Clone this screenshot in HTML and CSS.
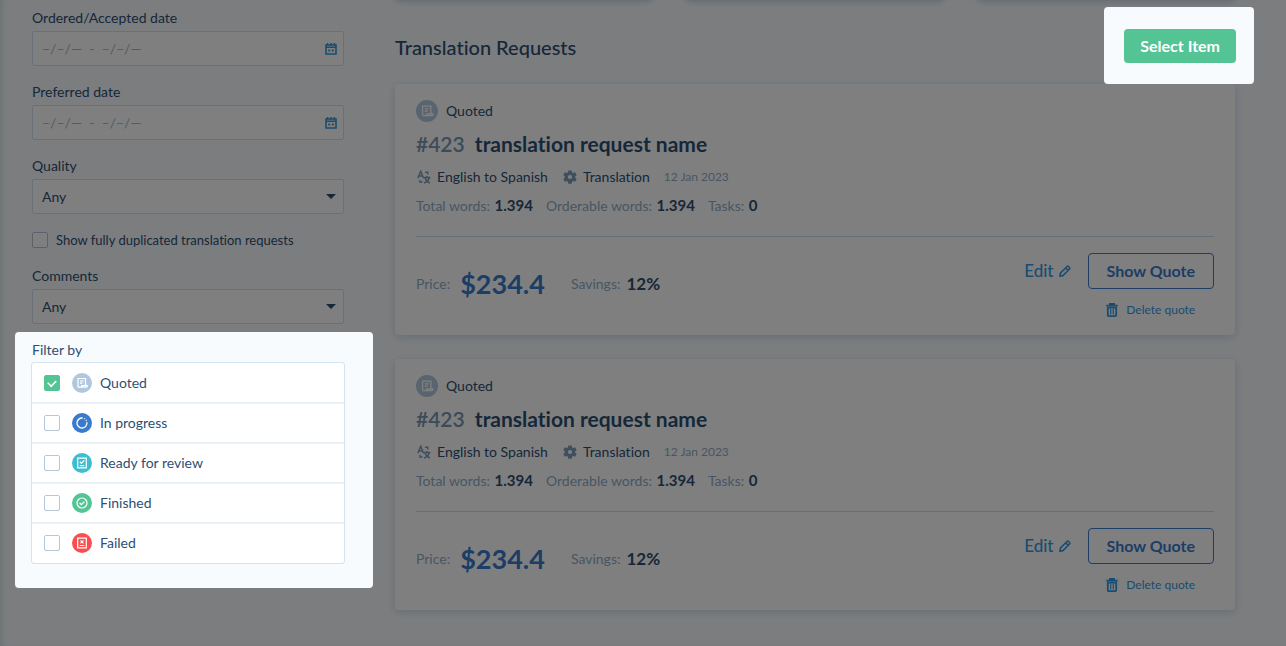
FILE: index.html
```html
<!DOCTYPE html>
<html lang="en">
<head>
  <meta charset="UTF-8">
  <meta name="viewport" content="width=device-width, initial-scale=1.0">
  <title>Translation Requests</title>
  <link rel="stylesheet" href="styles.css">
</head>
<body>
  <!-- shared icons -->
  <svg class="sprite" aria-hidden="true">
    <symbol id="icon-calendar" viewBox="0 0 12 12">
      <path d="M1 2h10v9H1zM1 4.2h10" fill="none" stroke="currentColor" stroke-width="1.6"/>
      <path d="M2.6 0v2.5M6 0v2.5M9.4 0v2.5" stroke="currentColor" stroke-width="1.6"/>
      <path d="M3.2 6.6h2v2h-2zM6.8 6.6h2v2h-2z" fill="currentColor"/>
    </symbol>
    <symbol id="icon-quoted" viewBox="0 0 20 20">
      <circle cx="10" cy="10" r="10" fill="#b0c8de"/>
      <path d="M6 14.2V5.5h7.5v7.2M6 14.2h8.2c.8 0 1.2-.7 1.2-1.5H9.6c0 .9-.5 1.5-1.4 1.5" fill="none" stroke="#fff" stroke-width="1.2"/>
      <path d="M8 8h3.6M8 10.2h2.4" stroke="#fff" stroke-width="1.2"/>
    </symbol>
    <symbol id="icon-progress" viewBox="0 0 20 20">
      <circle cx="10" cy="10" r="10" fill="#387acb"/>
      <path d="M10.8 5.1a5 5 0 1 0 4.1 4.1" fill="none" stroke="#fff" stroke-width="1.3"/>
      <path d="M12.3 5.5l.8.5M14 7l.5.8" stroke="#fff" stroke-width="1.3"/>
    </symbol>
    <symbol id="icon-review" viewBox="0 0 20 20">
      <circle cx="10" cy="10" r="10" fill="#3cbdd0"/>
      <path d="M5.7 5.2h8.6v9.6H5.7z" fill="none" stroke="#fff" stroke-width="1.2"/>
      <path d="M7.8 8.8l1.6 1.5 2.9-3M7.8 12.7h4.4" fill="none" stroke="#fff" stroke-width="1.2"/>
    </symbol>
    <symbol id="icon-finished" viewBox="0 0 20 20">
      <circle cx="10" cy="10" r="10" fill="#54c495"/>
      <circle cx="10" cy="10" r="5" fill="none" stroke="#fff" stroke-width="1.2"/>
      <path d="M7.6 10l1.8 1.7 3-3.1" fill="none" stroke="#fff" stroke-width="1.3"/>
    </symbol>
    <symbol id="icon-failed" viewBox="0 0 20 20">
      <circle cx="10" cy="10" r="10" fill="#f94d4f"/>
      <path d="M5.7 5.2h8.6v9.6H5.7z" fill="none" stroke="#fff" stroke-width="1.2"/>
      <path d="M8.5 7.3l3 3M11.5 7.3l-3 3M7.8 12.5h4.4" stroke="#fff" stroke-width="1.2"/>
    </symbol>
    <symbol id="icon-language" viewBox="0 0 14 14">
      <path d="M.8 8.2L3.7 1.2l2.9 7M1.8 6h3.8" fill="none" stroke="currentColor" stroke-width="1.5"/>
      <path d="M8 2.2h2.7v2.4M3 10v2h2.6M6.6 7.5h6.8M10 6v1.5M8 7.8c.6 2.3 2.4 4.2 5 5.2M12.2 7.8c-.6 2.3-2.6 4.3-5.2 5.2" fill="none" stroke="currentColor" stroke-width="1.5"/>
    </symbol>
    <symbol id="icon-gear" viewBox="0 0 14 14">
      <path fill="currentColor" fill-rule="evenodd" d="M5.3.4h3.4l.4 2 1.1.6 1.9-.7 1.6 2.8-1.5 1.3v1.3l1.5 1.3-1.6 2.8-1.9-.7-1.1.6-.4 2H5.3l-.4-2-1.1-.6-1.9.7L.3 9l1.5-1.3V6.4L.3 5.1l1.6-2.8 1.9.7 1.1-.6zM7 4.9a2.1 2.1 0 1 0 0 4.2 2.1 2.1 0 0 0 0-4.2z"/>
    </symbol>
    <symbol id="icon-pencil" viewBox="0 0 12 12">
      <path d="M.9 11.1l.5-3L8 1.5c.5-.5 1.1-.5 1.5 0l1 1c.5.4.5 1 0 1.5L3.9 10.6zM6.7 2.9l2.4 2.4" fill="none" stroke="currentColor" stroke-width="1.6" stroke-linejoin="round"/>
    </symbol>
    <symbol id="icon-trash" viewBox="0 0 12 14">
      <path d="M.3 2.7h11.4M3.9 2.3V.9h4.2v1.4" fill="none" stroke="currentColor" stroke-width="1.8"/>
      <path d="M1.8 4.6h8.4v7.6c0 .5-.4.9-.9.9H2.7c-.5 0-.9-.4-.9-.9z" fill="none" stroke="currentColor" stroke-width="1.8"/>
      <path d="M4.7 5.5v6M7.3 5.5v6" stroke="currentColor" stroke-width="1.2"/>
    </symbol>
  </svg>

  <div class="page">
    <aside class="sidebar">
      <div class="field">
        <label for="ordered">Ordered/Accepted date</label>
        <div class="date-input">
          <input type="text" id="ordered" placeholder="–/–/—  -  –/–/—">
          <svg class="icon-calendar"><use href="#icon-calendar"/></svg>
        </div>
      </div>
      <div class="field">
        <label for="preferred">Preferred date</label>
        <div class="date-input">
          <input type="text" id="preferred" placeholder="–/–/—  -  –/–/—">
          <svg class="icon-calendar"><use href="#icon-calendar"/></svg>
        </div>
      </div>
      <div class="field">
        <label for="quality">Quality</label>
        <div class="select">
          <select id="quality"><option>Any</option></select>
          <span class="arrow"></span>
        </div>
      </div>
      <label class="check-line">
        <input type="checkbox"> Show fully duplicated translation requests
      </label>
      <div class="field">
        <label for="comments">Comments</label>
        <div class="select">
          <select id="comments"><option>Any</option></select>
          <span class="arrow"></span>
        </div>
      </div>

      <fieldset class="filter highlight">
        <legend>Filter by</legend>
        <div class="filter-list">
          <label><input type="checkbox" checked><svg><use href="#icon-quoted"/></svg>Quoted</label>
          <label><input type="checkbox"><svg><use href="#icon-progress"/></svg>In progress</label>
          <label><input type="checkbox"><svg><use href="#icon-review"/></svg>Ready for review</label>
          <label><input type="checkbox"><svg><use href="#icon-finished"/></svg>Finished</label>
          <label><input type="checkbox"><svg><use href="#icon-failed"/></svg>Failed</label>
        </div>
      </fieldset>
    </aside>

    <main class="content">
      <div class="summary">
        <div class="summary-card"></div>
        <div class="summary-card"></div>
        <div class="summary-card"></div>
      </div>

      <header class="heading">
        <h1>Translation Requests</h1>
        <div class="select-item highlight">
          <button type="button" class="btn-green">Select Item</button>
        </div>
      </header>

      <div class="requests">
        <article class="card">
          <div class="status"><svg><use href="#icon-quoted"/></svg>Quoted</div>
          <h2><span>#423</span> translation request name</h2>
          <div class="meta">
            <span class="meta-item"><svg><use href="#icon-language"/></svg>English to Spanish</span>
            <span class="meta-item"><svg><use href="#icon-gear"/></svg>Translation</span>
            <time datetime="2023-01-12">12 Jan 2023</time>
          </div>
          <div class="totals">
            <span>Total words: <b>1.394</b></span>
            <span>Orderable words: <b>1.394</b></span>
            <span>Tasks: <b>0</b></span>
          </div>
          <div class="card-footer">
            <div class="prices">
              <span class="price">Price: <b>$234.4</b></span>
              <span class="savings">Savings: <b>12%</b></span>
            </div>
            <a href="#" class="edit">Edit <svg><use href="#icon-pencil"/></svg></a>
            <div class="actions">
              <button type="button" class="btn-outline">Show Quote</button>
              <a href="#" class="delete"><svg><use href="#icon-trash"/></svg>Delete quote</a>
            </div>
          </div>
        </article>

        <article class="card">
          <div class="status"><svg><use href="#icon-quoted"/></svg>Quoted</div>
          <h2><span>#423</span> translation request name</h2>
          <div class="meta">
            <span class="meta-item"><svg><use href="#icon-language"/></svg>English to Spanish</span>
            <span class="meta-item"><svg><use href="#icon-gear"/></svg>Translation</span>
            <time datetime="2023-01-12">12 Jan 2023</time>
          </div>
          <div class="totals">
            <span>Total words: <b>1.394</b></span>
            <span>Orderable words: <b>1.394</b></span>
            <span>Tasks: <b>0</b></span>
          </div>
          <div class="card-footer">
            <div class="prices">
              <span class="price">Price: <b>$234.4</b></span>
              <span class="savings">Savings: <b>12%</b></span>
            </div>
            <a href="#" class="edit">Edit <svg><use href="#icon-pencil"/></svg></a>
            <div class="actions">
              <button type="button" class="btn-outline">Show Quote</button>
              <a href="#" class="delete"><svg><use href="#icon-trash"/></svg>Delete quote</a>
            </div>
          </div>
        </article>
      </div>
    </main>
  </div>

  <div class="overlay"></div>
</body>
</html>
```
FILE: styles.css
```css
* {
  box-sizing: border-box;
}

body {
  margin: 0;
  min-height: 100vh;
  background: #f8fbfe;
  color: #2d4f73;
  font-family: Lato, "Open Sans", sans-serif;
  font-size: 14px;
  line-height: 20px;
  font-variant-ligatures: none;
}

a {
  color: #3399e0;
  text-decoration: none;
}

button,
input,
select {
  font: inherit;
  color: inherit;
}

.sprite {
  display: none;
}

/* dimmed page with highlighted parts on top */
.overlay {
  position: fixed;
  inset: 0;
  background: rgba(0, 0, 0, 0.5);
  z-index: 1;
  pointer-events: none;
}

.highlight {
  position: relative;
  z-index: 2;
  background: #f8fbfe;
  border-radius: 4px;
}

.page {
  display: flex;
  gap: 22px;
  min-height: 100vh;
  padding: 0 51px 0 15px;
  box-shadow: inset 6px 0 6px -4px #d3e3e8;
}

/* sidebar */
.sidebar {
  flex: 0 0 358px;
  padding-top: 8px;
}

.field,
.check-line {
  margin: 0 29px 16px 17px;
}

.field {
  display: flex;
  flex-direction: column;
  gap: 3px;
}

.date-input {
  display: flex;
  align-items: center;
  height: 35px;
  padding: 0 6px 0 9px;
  background: #fff;
  border: 1px solid #d3e1ee;
  border-radius: 2px;
}

.date-input input {
  flex: 1;
  min-width: 0;
  padding: 0;
  border: none;
  outline: none;
  background: none;
}

.date-input input::placeholder {
  color: #a0bad0;
  opacity: 1;
  white-space: pre;
}

.icon-calendar {
  width: 12px;
  height: 12px;
  color: #3399e0;
}

.select {
  display: grid;
  align-items: center;
}

.select select,
.arrow {
  grid-area: 1 / 1;
}

.select select {
  appearance: none;
  height: 35px;
  padding: 0 24px 0 9px;
  background: #fff;
  border: 1px solid #d3e1ee;
  border-radius: 2px;
}

.arrow {
  justify-self: end;
  margin-right: 8px;
  border: 5px solid transparent;
  border-top-color: #2d4f73;
  border-bottom: none;
  pointer-events: none;
}

input[type="checkbox"] {
  appearance: none;
  flex: none;
  display: grid;
  place-items: center;
  width: 16px;
  height: 16px;
  margin: 0;
  background: #fff;
  border: 1px solid #b5c7d8;
  border-radius: 2px;
}

input[type="checkbox"]:checked {
  background: #54c495;
  border-color: #54c495;
}

input[type="checkbox"]:checked::before {
  content: "";
  width: 8px;
  height: 5px;
  border: solid #fff;
  border-width: 0 0 2px 2px;
  transform: translateY(-1px) rotate(-45deg) scale(0.8);
}

.check-line {
  display: flex;
  align-items: center;
  gap: 8px;
  font-size: 13px;
}

.filter {
  margin: -8px 0 0;
  padding: 8px 28px 24px 16px;
  border: none;
}

.filter legend {
  float: left;
  width: 100%;
  padding: 0 1px;
  margin-bottom: 2px;
}

.filter-list {
  clear: both;
  background: #fff;
  border: 1px solid #d3e3f0;
  border-radius: 3px;
}

.filter-list label {
  display: flex;
  align-items: center;
  height: 40px;
  padding: 0 12px;
}

.filter-list label:not(:last-child) {
  box-shadow: 0 1px #eaf1f6, inset 0 -1px #eaf1f6;
}

.filter-list svg {
  width: 20px;
  height: 20px;
  margin: 0 8px 0 12px;
}

/* content */
.content {
  flex: 1;
  min-width: 0;
}

.summary {
  display: grid;
  grid-template-columns: repeat(3, 1fr);
  gap: 34px;
  margin-top: -12px;
}

.summary-card {
  height: 12px;
  background: #fff;
  border-radius: 4px;
  box-shadow: 0 2px 6px #c5d6e4;
}

.heading {
  display: flex;
  align-items: center;
  justify-content: space-between;
  padding-top: 7px;
}

h1 {
  margin: 0;
  padding-top: 2px;
  font-size: 20px;
  line-height: 28px;
  font-weight: 500;
}

.select-item {
  margin-right: -19px;
  padding: 22px 18px 21px 20px;
}

.btn-green,
.btn-outline {
  display: block;
  padding: 0 16px;
  border-radius: 4px;
  font-size: 16px;
  font-weight: 700;
  cursor: pointer;
}

.btn-green {
  height: 34px;
  background: #54c495;
  color: #fff;
  border: none;
}

.btn-outline {
  height: 36px;
  padding: 0 18px;
  background: #fff;
  color: #387acb;
  border: 1px solid #387acb;
}

.requests {
  display: flex;
  flex-direction: column;
  gap: 24px;
}

.card {
  padding: 16px 21px 15px;
  background: #fff;
  border-radius: 4px;
  box-shadow: 0 2px 8px #ccdbe8;
}

.status {
  display: flex;
  align-items: center;
  gap: 8px;
  height: 22px;
}

.status svg {
  width: 22px;
  height: 22px;
}

h2 {
  margin: 8px 0 9px;
  font-size: 21px;
  line-height: 28px;
  font-weight: 700;
}

h2 span {
  margin-right: 5px;
  color: #7896b5;
  font-weight: 600;
}

.meta {
  display: flex;
  gap: 14px;
}

.meta-item {
  display: flex;
  align-items: center;
  gap: 6px;
}

.meta svg {
  width: 14px;
  height: 14px;
  margin-left: 1px;
  color: #7f9fbd;
}

.meta time {
  color: #8fadc8;
  font-size: 12px;
}

.totals {
  display: flex;
  gap: 13px;
  margin-top: 9px;
  padding-bottom: 20px;
  border-bottom: 1px solid #ccdeec;
  color: #8fadc8;
}

.totals b,
.savings b {
  color: #2d4f73;
}

.totals b {
  margin-left: 1px;
  font-size: 15px;
  line-height: 16px;
}

.card-footer {
  display: flex;
  align-items: flex-start;
  gap: 17px;
  padding-top: 16px;
}

.prices {
  flex: 1;
  align-self: center;
  display: flex;
  align-items: center;
  gap: 26px;
  padding-bottom: 5px;
  color: #8fadc8;
}

.price,
.savings {
  display: flex;
  align-items: center;
}

.price b {
  margin-left: 10px;
  color: #387acb;
  font-size: 27px;
}

.savings b {
  margin-left: 6px;
  font-size: 17px;
}

.edit {
  display: flex;
  align-items: center;
  gap: 5px;
  height: 36px;
  font-size: 17px;
  font-weight: 500;
}

.edit svg {
  width: 12px;
  height: 12px;
}

.actions {
  display: flex;
  flex-direction: column;
  align-items: center;
  gap: 11px;
}

.delete {
  display: flex;
  align-items: center;
  gap: 8px;
  font-size: 12px;
}

.delete svg {
  width: 12px;
  height: 14px;
}
```
